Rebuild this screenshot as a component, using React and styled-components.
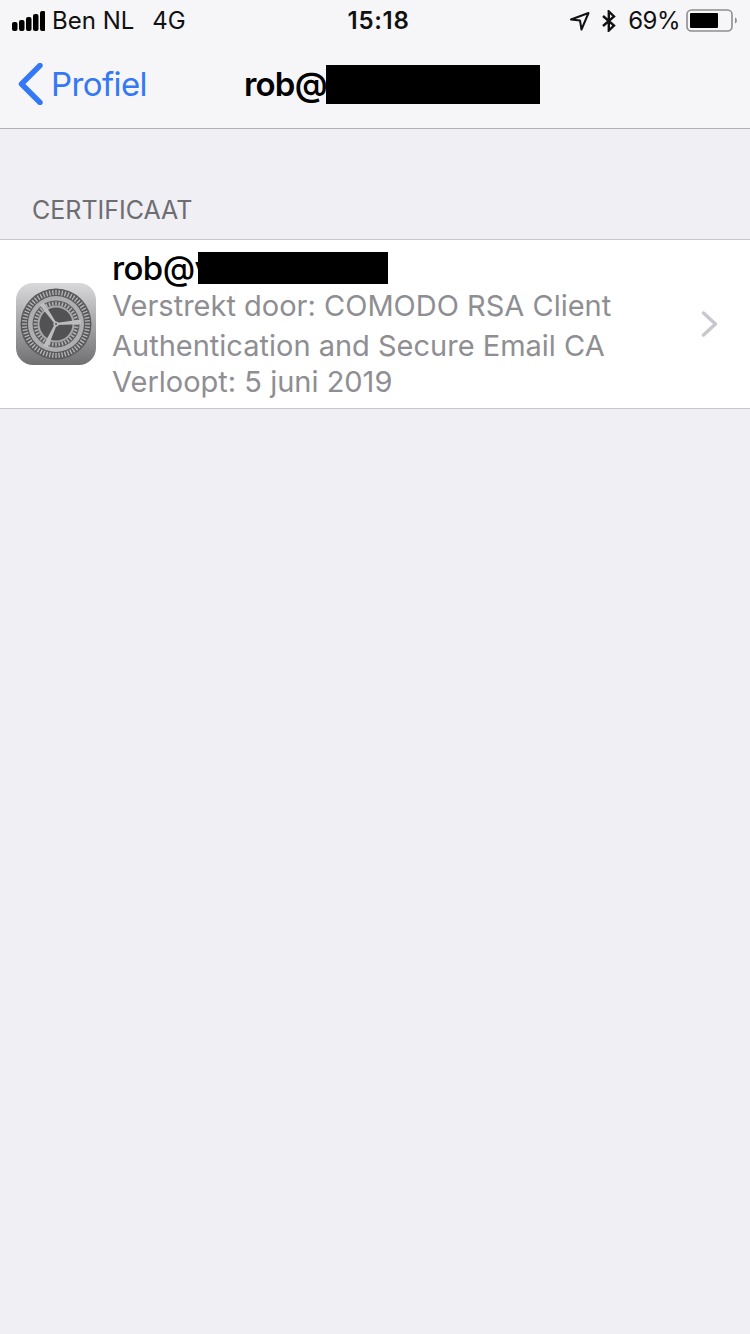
import React from "react";
import styled, { createGlobalStyle } from "styled-components";

const GlobalStyle = createGlobalStyle`
  html, body {
    margin: 0;
    padding: 0;
    background: #efeff4;
  }
  body {
    font-family: Inter, "Liberation Sans", sans-serif;
    -webkit-font-smoothing: antialiased;
  }
`;

const Page = styled.div`
  width: 750px;
  height: 1334px;
  background: #efeff4;
  overflow: hidden;
`;

const Header = styled.header`
  background: #f6f6f8;
  border-bottom: 1px solid #b2b2b6;
  height: 128px;
`;

const StatusBar = styled.div`
  height: 40px;
  box-sizing: border-box;
  display: grid;
  grid-template-columns: 1fr auto 1fr;
  align-items: center;
  padding: 1px 12px 0;
  color: #111;
  font-size: 24px;
`;

const StatusLeft = styled.div`
  display: flex;
  align-items: center;
`;

const StatusRight = styled.div`
  display: flex;
  align-items: center;
  justify-content: flex-end;
  margin-right: -2px;
`;

const Carrier = styled.span`
  margin-left: 7px;
`;

const Network = styled.span`
  margin-left: 18px;
`;

const Clock = styled.span`
  font-weight: 600;
  letter-spacing: 0.7px;
  margin-left: 7px;
`;

const Percent = styled.span`
  margin: 0 6px 0 11px;
  letter-spacing: -0.5px;
`;

const Nav = styled.nav`
  height: 88px;
  display: flex;
  align-items: center;
  padding: 0 0 1px 18px;
`;

const BackLabel = styled.span`
  color: #3478f6;
  font-size: 33px;
  letter-spacing: -0.6px;
  margin-left: 8px;
`;

const NavTitle = styled.h1`
  display: flex;
  align-items: center;
  margin: 0 0 0 97px;
  font-size: 33px;
  font-weight: 600;
  letter-spacing: -0.8px;
  color: #000;
`;

const Redaction = styled.span`
  display: inline-block;
  flex: none;
  background: #000;
  width: ${(p) => p.$w}px;
  height: ${(p) => p.$h}px;
  margin-left: ${(p) => p.$overlap || 0}px;
`;

const SectionLabel = styled.div`
  color: #6d6d72;
  font-size: 25px;
  line-height: 30px;
  padding: 66px 0 14px 32px;
`;

const Row = styled.div`
  height: 170px;
  box-sizing: border-box;
  background: #fff;
  border-top: 1px solid #c8c7cc;
  border-bottom: 1px solid #c8c7cc;
  display: flex;
  align-items: flex-start;
  padding-left: 16px;
`;

const AppIcon = styled.svg`
  flex: none;
  width: 80px;
  height: 82px;
  margin-top: 43px;
`;

const RowText = styled.div`
  flex: 1;
  margin-left: 16px;
  padding-top: 12px;
`;

const RowTitle = styled.div`
  display: flex;
  align-items: center;
  height: 32px;
  font-size: 33px;
  font-weight: 500;
  letter-spacing: -0.6px;
  color: #000;
`;

const Detail = styled.div`
  color: #8e8e93;
  font-size: 29px;
  line-height: 36px;
  white-space: nowrap;
  margin-top: ${(p) => p.$gap}px;
`;

const Chevron = styled.svg`
  flex: none;
  width: 18px;
  height: 26px;
  margin: 71px 31px 0 0;
`;

function SignalBars() {
  const bars = [
    [0, 9],
    [7, 11],
    [14, 14],
    [21, 17],
    [28, 20],
  ];
  return (
    <svg width="33" height="20" viewBox="0 0 33 20">
      {bars.map(([x, h]) => (
        <rect key={x} x={x} y={20 - h} width="5.5" height={h} rx="2" fill="#000" />
      ))}
    </svg>
  );
}

function LocationArrow() {
  return (
    <svg width="20" height="20" viewBox="0 0 20 20" fill="none">
      <path
        d="M1 8.5 L18.5 2 L11.5 18.5 L10 9.5 Z"
        stroke="#111"
        strokeWidth="2"
        strokeLinejoin="round"
      />
    </svg>
  );
}

function BluetoothMark() {
  return (
    <svg width="16" height="22" viewBox="0 0 16 22" fill="none" style={{ marginLeft: 11 }}>
      <path
        d="M2 6 L13 15.5 L7.8 20.5 V1.5 L13 6.5 L2 16"
        stroke="#111"
        strokeWidth="2.4"
        strokeLinejoin="miter"
      />
    </svg>
  );
}

function Battery() {
  return (
    <svg width="54" height="24" viewBox="0 0 54 24">
      <rect x="1" y="1" width="45" height="21" rx="4.5" fill="none" stroke="#8e8e90" strokeWidth="1.6" />
      <rect x="4" y="4" width="28" height="15" rx="1" fill="#000" />
      <path d="M49 8.5 C51.5 9 51.5 14 49 14.5 Z" fill="#8e8e90" />
    </svg>
  );
}

function BackChevron() {
  return (
    <svg width="25" height="42" viewBox="0 0 25 42" fill="none">
      <path
        d="M22 2.5 L3.5 21 L22 39.5"
        stroke="#3478f6"
        strokeWidth="5.4"
        strokeLinecap="round"
        strokeLinejoin="round"
      />
    </svg>
  );
}

// settings gear: teeth are generated around two rings
function SettingsIcon() {
  const outer = Array.from({ length: 64 }, (_, i) => (i * 360) / 64);
  const inner = Array.from({ length: 40 }, (_, i) => (i * 360) / 40);
  return (
    <AppIcon viewBox="0 0 80 82">
      <defs>
        <linearGradient id="tile" x1="0" y1="0" x2="0" y2="1">
          <stop offset="0" stopColor="#d9d9db" />
          <stop offset="1" stopColor="#707073" />
        </linearGradient>
      </defs>
      <rect width="80" height="82" rx="17" fill="url(#tile)" />
      <g transform="translate(40 41)">
        <circle r="35.5" fill="#58585b" />
        {outer.map((a) => (
          <rect key={a} x="-0.65" y="-34" width="1.3" height="5" fill="#b8b8ba" transform={`rotate(${a})`} />
        ))}
        <circle r="28" fill="#aeaeb0" />
        <circle r="23.5" fill="#5b5b5e" />
        {inner.map((a) => (
          <rect key={a} x="-0.75" y="-22.5" width="1.5" height="4" fill="#b0b0b2" transform={`rotate(${a})`} />
        ))}
        <circle r="18.5" fill="#a9a9ab" />
        <circle r="16.5" fill="#525255" />
        {[-35, 85, 205].map((a) => (
          <path key={a} d="M-1 0 L-2.4 -25 L2.4 -25 L1 0 Z" fill="#bdbdbf" transform={`rotate(${a})`} />
        ))}
        <circle r="2.6" fill="#bdbdbf" />
        <circle r="1" fill="#525255" />
      </g>
    </AppIcon>
  );
}

export default function App() {
  return (
    <Page>
      <GlobalStyle />
      <Header>
        <StatusBar>
          <StatusLeft>
            <SignalBars />
            <Carrier>Ben NL</Carrier>
            <Network>4G</Network>
          </StatusLeft>
          <Clock>15:18</Clock>
          <StatusRight>
            <LocationArrow />
            <BluetoothMark />
            <Percent>69%</Percent>
            <Battery />
          </StatusRight>
        </StatusBar>
        <Nav>
          <BackChevron />
          <BackLabel>Profiel</BackLabel>
          <NavTitle>
            rob@
            <Redaction $w={214} $h={39} $overlap={-1} />
          </NavTitle>
        </Nav>
      </Header>
      <SectionLabel>CERTIFICAAT</SectionLabel>
      <Row>
        <SettingsIcon />
        <RowText>
          <RowTitle>
            rob@v
            <Redaction $w={190} $h={32} $overlap={-15} />
          </RowTitle>
          <Detail $gap={4}>Verstrekt door: COMODO RSA Client</Detail>
          <Detail $gap={4}>Authentication and Secure Email CA</Detail>
          <Detail $gap={0}>Verloopt: 5 juni 2019</Detail>
        </RowText>
        <Chevron viewBox="0 0 18 26" fill="none">
          <path d="M2.5 2 L14.5 13 L2.5 24" stroke="#c7c7cc" strokeWidth="3.4" strokeLinecap="round" strokeLinejoin="round" />
        </Chevron>
      </Row>
    </Page>
  );
}
